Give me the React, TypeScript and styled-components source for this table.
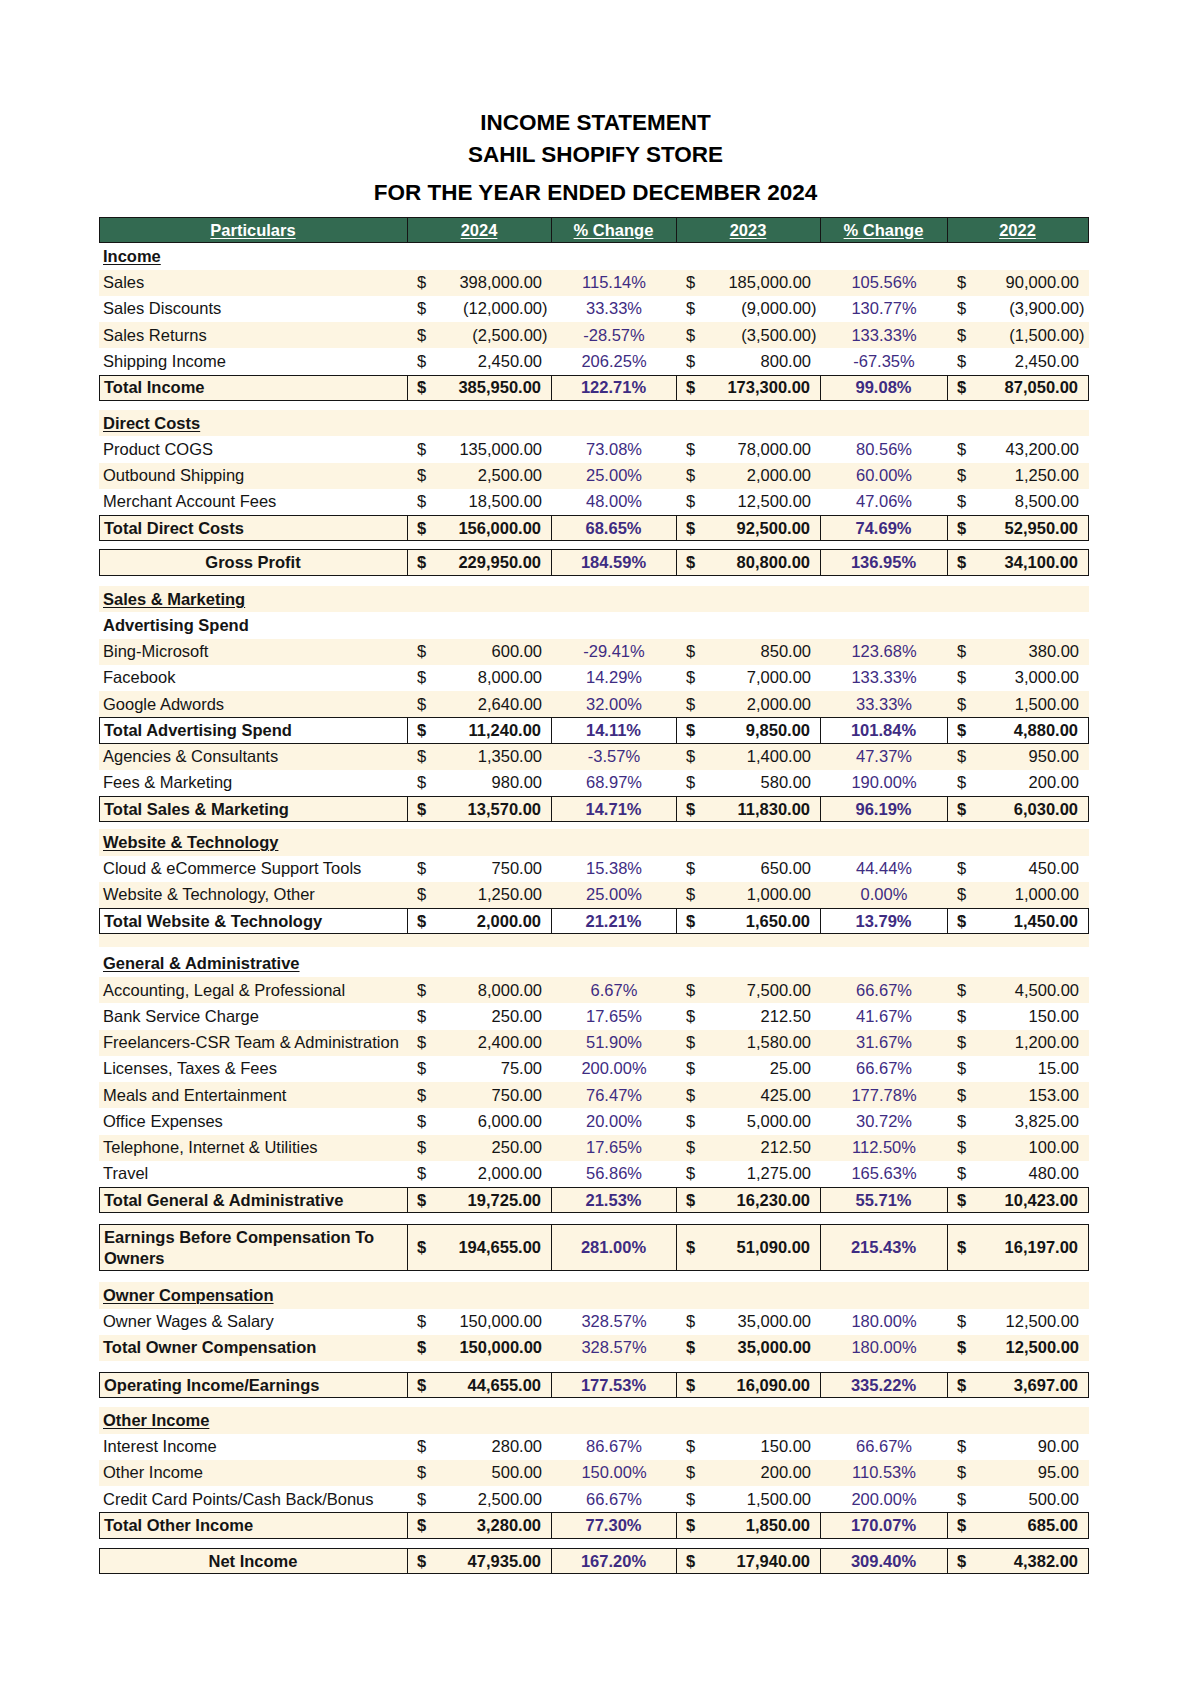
import React from "react";
import styled, { createGlobalStyle, css } from "styled-components";

const GlobalStyle = createGlobalStyle`
  html, body { margin: 0; padding: 0; background: #ffffff; }
  body { font-family: "Liberation Sans", Arial, Helvetica, sans-serif; color: #141414; }
  * { box-sizing: border-box; }
`;

const CREAM = "#fdf5e2";
const PURPLE = "#3e2c82";
const LINE = "#151515";
const GREEN = "#336a51";
const COLS = "309px 144px 125px 144px 127px 141px";

const Page = styled.div`
  width: 1191px;
  padding-top: 107px;
  padding-bottom: 100px;
`;

const TitleBlock = styled.header`
  display: flex;
  flex-direction: column;
  align-items: center;
  margin-bottom: 8px;
`;

const TitleLine = styled.h1<{ $gap?: number }>`
  margin: ${(p) => p.$gap ?? 0}px 0 0;
  font-size: 22.5px;
  line-height: 32px;
  font-weight: 700;
  color: #000;
  letter-spacing: 0;
`;

const Sheet = styled.section`
  width: 990px;
  margin: 0 0 0 98.5px;
  font-size: 16.5px;
`;

const HeaderRow = styled.div`
  display: grid;
  grid-template-columns: ${COLS};
  height: 26.25px;
  background: ${GREEN};
`;

const HeaderCell = styled.div<{ $first?: boolean }>`
  display: flex;
  align-items: center;
  justify-content: center;
  color: #ffffff;
  font-weight: 700;
  text-decoration: underline;
  text-underline-offset: 2px;
  border-top: 1px solid ${LINE};
  border-bottom: 1.5px solid ${LINE};
  border-right: 1px solid ${LINE};
  ${(p) => p.$first && css`border-left: 1px solid ${LINE};`}
`;

const Row = styled.div<{ $cream?: boolean; $bold?: boolean; $h?: number }>`
  display: grid;
  grid-template-columns: ${COLS};
  height: ${(p) => p.$h ?? 26.25}px;
  background: ${(p) => (p.$cream ? CREAM : "transparent")};
  font-weight: ${(p) => (p.$bold ? 700 : 400)};
`;

const Cell = styled.div<{ $boxed?: boolean; $first?: boolean }>`
  display: flex;
  align-items: center;
  min-width: 0;
  ${(p) =>
    p.$boxed &&
    css`
      border-top: 1px solid ${LINE};
      border-bottom: 1px solid ${LINE};
      border-right: 1px solid ${LINE};
    `}
  ${(p) => p.$boxed && p.$first && css`border-left: 1px solid ${LINE};`}
`;

const LabelCell = styled(Cell)<{ $center?: boolean }>`
  padding: 0 4px 0 ${(p) => (p.$center ? 4 : 4.5)}px;
  justify-content: ${(p) => (p.$center ? "center" : "flex-start")};
  line-height: 21px;
`;

const SectionTitle = styled.span`
  font-weight: 700;
  text-decoration: underline;
  text-decoration-thickness: 1px;
  text-underline-offset: 2px;
`;

const MoneyCell = styled(Cell)`
  justify-content: space-between;
  padding-left: 9.5px;
`;

const Dollar = styled.span``;

const Amount = styled.span<{ $neg?: boolean }>`
  padding-right: ${(p) => (p.$neg ? "4px" : "calc(4px + 0.333em)")};
`;

const PctCell = styled(Cell)<{ $strong?: boolean }>`
  justify-content: center;
  color: ${PURPLE};
  font-weight: ${(p) => (p.$strong ? 700 : 400)};
`;

const Spacer = styled.div<{ $h: number; $cream?: boolean }>`
  height: ${(p) => p.$h}px;
  background: ${(p) => (p.$cream ? CREAM : "transparent")};
`;

type Vals = [string, string, string, string, string];

type Line =
  | { kind: "section"; label: string; cream?: boolean }
  | { kind: "subhead"; label: string; cream?: boolean }
  | { kind: "item"; label: string; v: Vals; cream?: boolean }
  | {
      kind: "total";
      label: string;
      v: Vals;
      cream?: boolean;
      boxed?: boolean;
      pctBold?: boolean;
      center?: boolean;
      h?: number;
    }
  | { kind: "spacer"; h: number; cream?: boolean };

const lines: Line[] = [
  { kind: "section", label: "Income" },
  { kind: "item", label: "Sales", v: ["398,000.00", "115.14%", "185,000.00", "105.56%", "90,000.00"], cream: true },
  { kind: "item", label: "Sales Discounts", v: ["(12,000.00)", "33.33%", "(9,000.00)", "130.77%", "(3,900.00)"] },
  { kind: "item", label: "Sales Returns", v: ["(2,500.00)", "-28.57%", "(3,500.00)", "133.33%", "(1,500.00)"], cream: true },
  { kind: "item", label: "Shipping Income", v: ["2,450.00", "206.25%", "800.00", "-67.35%", "2,450.00"] },
  { kind: "total", label: "Total Income", v: ["385,950.00", "122.71%", "173,300.00", "99.08%", "87,050.00"], cream: true, boxed: true, pctBold: true },
  { kind: "spacer", h: 9.25 },
  { kind: "section", label: "Direct Costs", cream: true },
  { kind: "item", label: "Product COGS", v: ["135,000.00", "73.08%", "78,000.00", "80.56%", "43,200.00"] },
  { kind: "item", label: "Outbound Shipping", v: ["2,500.00", "25.00%", "2,000.00", "60.00%", "1,250.00"], cream: true },
  { kind: "item", label: "Merchant Account Fees", v: ["18,500.00", "48.00%", "12,500.00", "47.06%", "8,500.00"] },
  { kind: "total", label: "Total Direct Costs", v: ["156,000.00", "68.65%", "92,500.00", "74.69%", "52,950.00"], cream: true, boxed: true, pctBold: true },
  { kind: "spacer", h: 8 },
  { kind: "total", label: "Gross Profit", v: ["229,950.00", "184.59%", "80,800.00", "136.95%", "34,100.00"], cream: true, boxed: true, pctBold: true, center: true },
  { kind: "spacer", h: 10.5 },
  { kind: "section", label: "Sales & Marketing", cream: true },
  { kind: "subhead", label: "Advertising Spend" },
  { kind: "item", label: "Bing-Microsoft", v: ["600.00", "-29.41%", "850.00", "123.68%", "380.00"], cream: true },
  { kind: "item", label: "Facebook", v: ["8,000.00", "14.29%", "7,000.00", "133.33%", "3,000.00"] },
  { kind: "item", label: "Google Adwords", v: ["2,640.00", "32.00%", "2,000.00", "33.33%", "1,500.00"], cream: true },
  { kind: "total", label: "Total Advertising Spend", v: ["11,240.00", "14.11%", "9,850.00", "101.84%", "4,880.00"], boxed: true, pctBold: true },
  { kind: "item", label: "Agencies & Consultants", v: ["1,350.00", "-3.57%", "1,400.00", "47.37%", "950.00"], cream: true },
  { kind: "item", label: "Fees & Marketing", v: ["980.00", "68.97%", "580.00", "190.00%", "200.00"] },
  { kind: "total", label: "Total Sales & Marketing", v: ["13,570.00", "14.71%", "11,830.00", "96.19%", "6,030.00"], cream: true, boxed: true, pctBold: true },
  { kind: "spacer", h: 7 },
  { kind: "section", label: "Website & Technology", cream: true },
  { kind: "item", label: "Cloud & eCommerce Support Tools", v: ["750.00", "15.38%", "650.00", "44.44%", "450.00"] },
  { kind: "item", label: "Website & Technology, Other", v: ["1,250.00", "25.00%", "1,000.00", "0.00%", "1,000.00"], cream: true },
  { kind: "total", label: "Total Website & Technology", v: ["2,000.00", "21.21%", "1,650.00", "13.79%", "1,450.00"], boxed: true, pctBold: true },
  { kind: "spacer", h: 13, cream: true },
  { kind: "spacer", h: 3.5 },
  { kind: "section", label: "General & Administrative" },
  { kind: "item", label: "Accounting, Legal & Professional", v: ["8,000.00", "6.67%", "7,500.00", "66.67%", "4,500.00"], cream: true },
  { kind: "item", label: "Bank Service Charge", v: ["250.00", "17.65%", "212.50", "41.67%", "150.00"] },
  { kind: "item", label: "Freelancers-CSR Team & Administration", v: ["2,400.00", "51.90%", "1,580.00", "31.67%", "1,200.00"], cream: true },
  { kind: "item", label: "Licenses, Taxes & Fees", v: ["75.00", "200.00%", "25.00", "66.67%", "15.00"] },
  { kind: "item", label: "Meals and Entertainment", v: ["750.00", "76.47%", "425.00", "177.78%", "153.00"], cream: true },
  { kind: "item", label: "Office Expenses", v: ["6,000.00", "20.00%", "5,000.00", "30.72%", "3,825.00"] },
  { kind: "item", label: "Telephone, Internet & Utilities", v: ["250.00", "17.65%", "212.50", "112.50%", "100.00"], cream: true },
  { kind: "item", label: "Travel", v: ["2,000.00", "56.86%", "1,275.00", "165.63%", "480.00"] },
  { kind: "total", label: "Total General & Administrative", v: ["19,725.00", "21.53%", "16,230.00", "55.71%", "10,423.00"], cream: true, boxed: true, pctBold: true },
  { kind: "spacer", h: 11 },
  { kind: "total", label: "Earnings Before Compensation To Owners", v: ["194,655.00", "281.00%", "51,090.00", "215.43%", "16,197.00"], cream: true, boxed: true, pctBold: true, h: 47 },
  { kind: "spacer", h: 11 },
  { kind: "section", label: "Owner Compensation", cream: true },
  { kind: "item", label: "Owner Wages & Salary", v: ["150,000.00", "328.57%", "35,000.00", "180.00%", "12,500.00"] },
  { kind: "total", label: "Total Owner Compensation", v: ["150,000.00", "328.57%", "35,000.00", "180.00%", "12,500.00"], cream: true },
  { kind: "spacer", h: 11 },
  { kind: "total", label: "Operating Income/Earnings", v: ["44,655.00", "177.53%", "16,090.00", "335.22%", "3,697.00"], cream: true, boxed: true, pctBold: true },
  { kind: "spacer", h: 9 },
  { kind: "section", label: "Other Income", cream: true },
  { kind: "item", label: "Interest Income", v: ["280.00", "86.67%", "150.00", "66.67%", "90.00"] },
  { kind: "item", label: "Other Income", v: ["500.00", "150.00%", "200.00", "110.53%", "95.00"], cream: true },
  { kind: "item", label: "Credit Card Points/Cash Back/Bonus", v: ["2,500.00", "66.67%", "1,500.00", "200.00%", "500.00"] },
  { kind: "total", label: "Total Other Income", v: ["3,280.00", "77.30%", "1,850.00", "170.07%", "685.00"], cream: true, boxed: true, pctBold: true },
  { kind: "spacer", h: 9.5 },
  { kind: "total", label: "Net Income", v: ["47,935.00", "167.20%", "17,940.00", "309.40%", "4,382.00"], cream: true, boxed: true, pctBold: true, center: true },
];

const Money: React.FC<{ value: string; boxed?: boolean }> = ({ value, boxed }) => (
  <MoneyCell $boxed={boxed}>
    <Dollar>$</Dollar>
    <Amount $neg={value.startsWith("(")}>{value}</Amount>
  </MoneyCell>
);

const Values: React.FC<{ v: Vals; boxed?: boolean; pctBold?: boolean }> = ({ v, boxed, pctBold }) => (
  <>
    <Money value={v[0]} boxed={boxed} />
    <PctCell $boxed={boxed} $strong={pctBold}>{v[1]}</PctCell>
    <Money value={v[2]} boxed={boxed} />
    <PctCell $boxed={boxed} $strong={pctBold}>{v[3]}</PctCell>
    <Money value={v[4]} boxed={boxed} />
  </>
);

const renderLine = (l: Line, i: number) => {
  switch (l.kind) {
    case "spacer":
      return <Spacer key={i} $h={l.h} $cream={l.cream} />;
    case "section":
      return (
        <Row key={i} $cream={l.cream}>
          <LabelCell>
            <SectionTitle>{l.label}</SectionTitle>
          </LabelCell>
        </Row>
      );
    case "subhead":
      return (
        <Row key={i} $cream={l.cream} $bold>
          <LabelCell>{l.label}</LabelCell>
        </Row>
      );
    case "item":
      return (
        <Row key={i} $cream={l.cream}>
          <LabelCell>{l.label}</LabelCell>
          <Values v={l.v} />
        </Row>
      );
    case "total":
      return (
        <Row key={i} $cream={l.cream} $bold $h={l.h}>
          <LabelCell $boxed={l.boxed} $first $center={l.center}>
            {l.label}
          </LabelCell>
          <Values v={l.v} boxed={l.boxed} pctBold={l.pctBold} />
        </Row>
      );
  }
};

export default function App() {
  return (
    <Page>
      <GlobalStyle />
      <TitleBlock>
        <TitleLine>INCOME STATEMENT</TitleLine>
        <TitleLine>SAHIL SHOPIFY STORE</TitleLine>
        <TitleLine $gap={6}>FOR THE YEAR ENDED DECEMBER 2024</TitleLine>
      </TitleBlock>
      <Sheet>
        <HeaderRow>
          <HeaderCell $first>Particulars</HeaderCell>
          <HeaderCell>2024</HeaderCell>
          <HeaderCell>% Change</HeaderCell>
          <HeaderCell>2023</HeaderCell>
          <HeaderCell>% Change</HeaderCell>
          <HeaderCell>2022</HeaderCell>
        </HeaderRow>
        {lines.map(renderLine)}
      </Sheet>
    </Page>
  );
}
